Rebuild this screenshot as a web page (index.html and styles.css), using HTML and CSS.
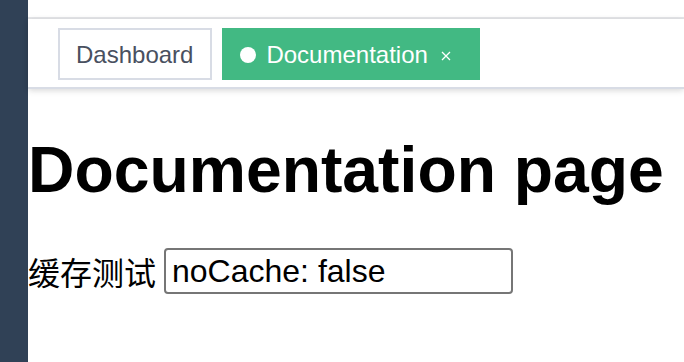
FILE: index.html
```html
<!DOCTYPE html>
<html lang="zh">
<head>
<meta charset="utf-8">
<title>Documentation page</title>
<link rel="stylesheet" href="styles.css">
</head>
<body>
<div class="app">
  <aside class="sidebar"></aside>
  <div class="main">
    <div class="navbar"></div>
    <div class="tags-view">
      <a class="tag">Dashboard</a>
      <a class="tag active"><span class="dot"></span>Documentation<svg class="close" width="32" height="10" viewBox="0 0 32 10"><path d="M12 1 L20 9 M20 1 L12 9" stroke="#fff" stroke-width="1.3" fill="none"/></svg></a>
    </div>
    <section class="content">
      <h1 class="title">Documentation page</h1>
      <div class="row">
        <span class="label">缓存测试</span>
        <input class="field" type="text" value="noCache: false">
      </div>
    </section>
  </div>
</div>
</body>
</html>
```
FILE: styles.css
```css
html, body {
  margin: 0;
  padding: 0;
  height: 100%;
  background: #fff;
}
body {
  font-family: "Liberation Sans", Arial, "Noto Sans CJK SC", sans-serif;
  overflow: hidden;
}
.app {
  display: flex;
  height: 100%;
}
.sidebar {
  width: 28px;
  flex: none;
  background: #304156;
}
.main {
  flex: 1;
  display: flex;
  flex-direction: column;
}
.navbar {
  height: 17px;
  border-bottom: 2px solid #e6e7ea;
}
.tags-view {
  height: 68px;
  border-bottom: 2px solid #d8dce5;
  box-shadow: 0 2px 6px 0 rgba(0, 0, 0, 0.12), 0 0 6px 0 rgba(0, 0, 0, 0.04);
  display: flex;
  align-items: flex-start;
  padding-left: 30px;
}
.tag {
  margin-top: 9px;
  height: 52px;
  box-sizing: border-box;
  border: 2px solid #d8dce5;
  background: #fff;
  color: #495060;
  font-size: 24px;
  line-height: 47px;
  padding: 1px 17px 0 16px;
  white-space: nowrap;
  cursor: pointer;
}
.tag + .tag {
  margin-left: 10px;
}
.tag.active {
  background: #42b983;
  border-color: #42b983;
  color: #fff;
  padding-right: 16px;
}
.dot {
  display: inline-block;
  width: 16px;
  height: 16px;
  border-radius: 50%;
  background: #fff;
  margin-right: 10px;
}
.close {
  width: 32px;
  height: 10px;
  margin-left: 2px;
  vertical-align: middle;
  margin-top: -2px;
}
.content {
  padding: 0;
}
.title {
  margin: 44px 0 41px;
  font-size: 64.3px;
  line-height: 74px;
  font-weight: bold;
  color: #000;
}
.row {
  display: flex;
  align-items: center;
  gap: 8px;
  font-size: 32px;
}
.label {
  font-family: "Noto Sans CJK SC", sans-serif;
  line-height: 46px;
  color: #000;
}
.field {
  width: 349px;
  height: 46px;
  box-sizing: border-box;
  border: 2px solid #767676;
  border-radius: 4px;
  padding: 2px 6px;
  font-family: "Liberation Sans", Arial, sans-serif;
  font-size: 32px;
  color: #000;
  background: #fff;
  outline: none;
}
```
